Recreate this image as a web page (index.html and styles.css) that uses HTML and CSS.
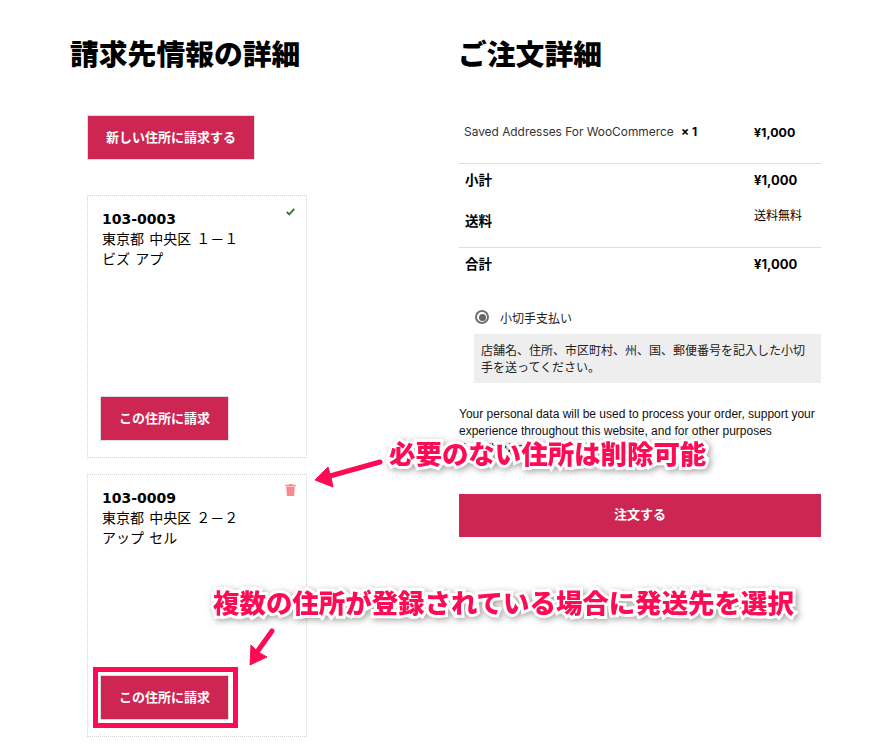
FILE: index.html
```html
<!DOCTYPE html>
<html lang="ja">
<head>
<meta charset="utf-8">
<title>Checkout</title>
<link rel="stylesheet" href="styles.css">
</head>
<body>
<div class="page">
  <section class="billing">
    <h2 class="title">請求先情報の詳細</h2>
    <div class="billing-body">
      <a class="btn btn-new">新しい住所に請求する</a>
      <div class="card">
        <svg class="card-icon check" viewBox="0 0 12 12" width="9" height="9"><path d="M1 6.500 4.300 9.800 11 2.600" fill="none" stroke="#2e7d32" stroke-width="2.600"/></svg>
        <div class="addr">
          <strong>103-0003</strong>
          <span>東京都 中央区 １－１</span>
          <span>ビズ アプ</span>
        </div>
        <a class="btn btn-card">この住所に請求</a>
      </div>
      <div class="card">
        <svg class="card-icon trash" viewBox="0 0 12 14" width="11" height="12"><path d="M4.400 0h3.200l.5 1H12v1.800H0V1h3.900zM1 3.600h10l-.8 10.400H1.800z" fill="#f78a8e"/></svg>
        <div class="addr">
          <strong>103-0009</strong>
          <span>東京都 中央区 ２－２</span>
          <span>アップ セル</span>
        </div>
        <a class="btn btn-card btn-marked">この住所に請求</a>
      </div>
    </div>
  </section>
  <section class="order">
    <h2 class="title">ご注文詳細</h2>
    <div class="row row-item">
      <span class="item-name">Saved Addresses For WooCommerce <b>× 1</b></span>
      <b class="item-price">¥1,000</b>
    </div>
    <div class="row row-sub"><b>小計</b><b class="amount">¥1,000</b></div>
    <div class="row row-ship"><b class="ship-label">送料</b><span class="ship-free">送料無料</span></div>
    <div class="row row-total"><b>合計</b><b class="amount">¥1,000</b></div>
    <div class="pay">
      <label class="pay-label"><span class="radio"></span>小切手支払い</label>
      <p class="pay-box">店舗名、住所、市区町村、州、国、郵便番号を記入した小切手を送ってください。</p>
    </div>
    <p class="privacy">Your personal data will be used to process your order, support your experience throughout this website, and for other purposes described in our privacy policy.</p>
    <a class="btn btn-order">注文する</a>
  </section>
  <div class="note note-delete">必要のない住所は削除可能</div>
  <div class="note note-select">複数の住所が登録されている場合に発送先を選択</div>
  <svg class="arrows" viewBox="0 0 880 756" width="880" height="756">
    <path d="M380 462 330 476" stroke="#ff0a54" stroke-width="5" stroke-linecap="round" fill="none"/>
    <path d="M315 480 328 467 331 477 333 487z" fill="#ff0a54" stroke="#ff0a54" stroke-linejoin="round"/>
    <path d="M272 631 257 652" stroke="#ff0a54" stroke-width="5" stroke-linecap="round" fill="none"/>
    <path d="M250 665 251 645 258 652 267 657z" fill="#ff0a54" stroke="#ff0a54" stroke-linejoin="round"/>
  </svg>
</div>
</body>
</html>
```

FILE: styles.css
```css
* { box-sizing: border-box; }
html, body { margin: 0; padding: 0; background: #fff; }
body {
  font-family: "Noto Sans CJK JP", "Liberation Sans", sans-serif;
  color: #000;
  width: 880px;
  height: 756px;
  overflow: hidden;
}
.page {
  position: relative;
  display: flex;
  height: 756px;
  padding: 33px 59px 0 71px;
}
.title {
  margin: 0 0 0 -1px;
  font-size: 28.8px;
  line-height: 40px;
  font-weight: 900;
}
.billing { width: 388px; }
.billing-body {
  width: 236px;
  margin: 42px 0 0 16px;
  display: flex;
  flex-direction: column;
  align-items: flex-start;
}
.btn {
  display: flex;
  align-items: center;
  justify-content: center;
  background: #cd2653;
  color: #fff;
  font-weight: 700;
  font-size: 13px;
  border: 1px solid #ddd;
  padding-bottom: 3px;
}
.btn-new { width: 168px; height: 45px; margin-bottom: 35px; }
.card {
  position: relative;
  width: 220px;
  height: 263px;
  border: 1px dotted #d4d4d4;
  margin-bottom: 16px;
  padding: 14px 0 0 14px;
  display: flex;
  flex-direction: column;
}
.card-icon { position: absolute; top: 11px; right: 11px; }
.trash { top: 9px; right: 10px; }
.addr { display: flex; flex-direction: column; font-size: 14px; line-height: 19.5px; flex: 1; word-spacing: 2px; }
.addr strong { font-family: "DejaVu Sans", sans-serif; font-size: 14px; line-height: 19px; }
.btn-card { width: 129px; height: 45px; margin: 0 0 16px -2px; flex-shrink: 0; }
.btn-marked { position: relative; }
.btn-marked::after {
  content: "";
  position: absolute;
  left: -8px;
  right: -10px;
  top: -9px;
  bottom: -9px;
  border: 5px solid #ff0a54;
}
.order { width: 362px; }
.row { display: flex; border-bottom: 1px solid transparent; }
.row > :last-child { margin-left: auto; }
.row b { font-size: 13.5px; line-height: 20px; }
.row-item { margin-top: 34px; height: 57px; padding: 15px 0 0 5px; border-bottom-color: #ddd; font-family: Inter, "Liberation Sans", sans-serif; }
.item-name { font-size: 11.9px; line-height: 20px; color: #333; }
.row .item-name b { margin-left: 4px; font-size: 12px; color: #000; }
.row .item-price { width: 67px; font-size: 12.4px; margin-top: 1px; }
.row-sub { height: 36px; padding: 5px 0 0 6px; align-items: flex-start; }
.row-sub .amount { margin-top: 1px; }
.row-ship { height: 48px; padding: 5px 0 0 6px; border-bottom-color: #ddd; }
.row-total { height: 34px; padding: 5px 0 0 6px; }
.row-total .amount { margin-top: 1px; }
.row .amount { width: 67px; font-family: Inter, "Noto Sans CJK JP", sans-serif; font-size: 13px; }
.ship-label { margin-top: 5px; }
.ship-free { width: 67px; font-size: 12px; line-height: 20px; }
.pay { margin: 25px 0 0 15px; }
.pay-label { display: flex; align-items: center; gap: 11px; font-size: 12px; height: 20px; padding-left: 1px; color: #222; }
.radio { width: 14px; height: 14px; border: 2px solid #707070; border-radius: 50%; background: #fff; display: flex; align-items: center; justify-content: center; }
.radio::after { content: ""; width: 7px; height: 7px; border-radius: 50%; background: #666; }
.pay-box { margin: 7px 0 0; height: 49px; background: #eee; padding: 7px 7px 0; font-size: 12px; line-height: 17px; color: #222; }
.privacy { margin: 23px 0 0; font-family: "Liberation Sans", sans-serif; font-size: 12px; line-height: 17px; height: 51px; color: #111; }
.btn-order { height: 43px; margin-top: 37px; border: 0; padding-bottom: 5px; }
.note {
  position: absolute;
  font-weight: 900;
  font-size: 26.45px;
  line-height: 32px;
  color: #ff0a54;
  white-space: nowrap;
  paint-order: stroke fill;
  -webkit-text-stroke: 6px #fff;
  filter: drop-shadow(2px 2px 3px rgba(0,0,0,.35));
}
.note-delete { left: 389px; top: 437px; }
.note-select { left: 213px; top: 586px; }
.arrows { position: absolute; left: 0; top: 0; pointer-events: none; }
```
